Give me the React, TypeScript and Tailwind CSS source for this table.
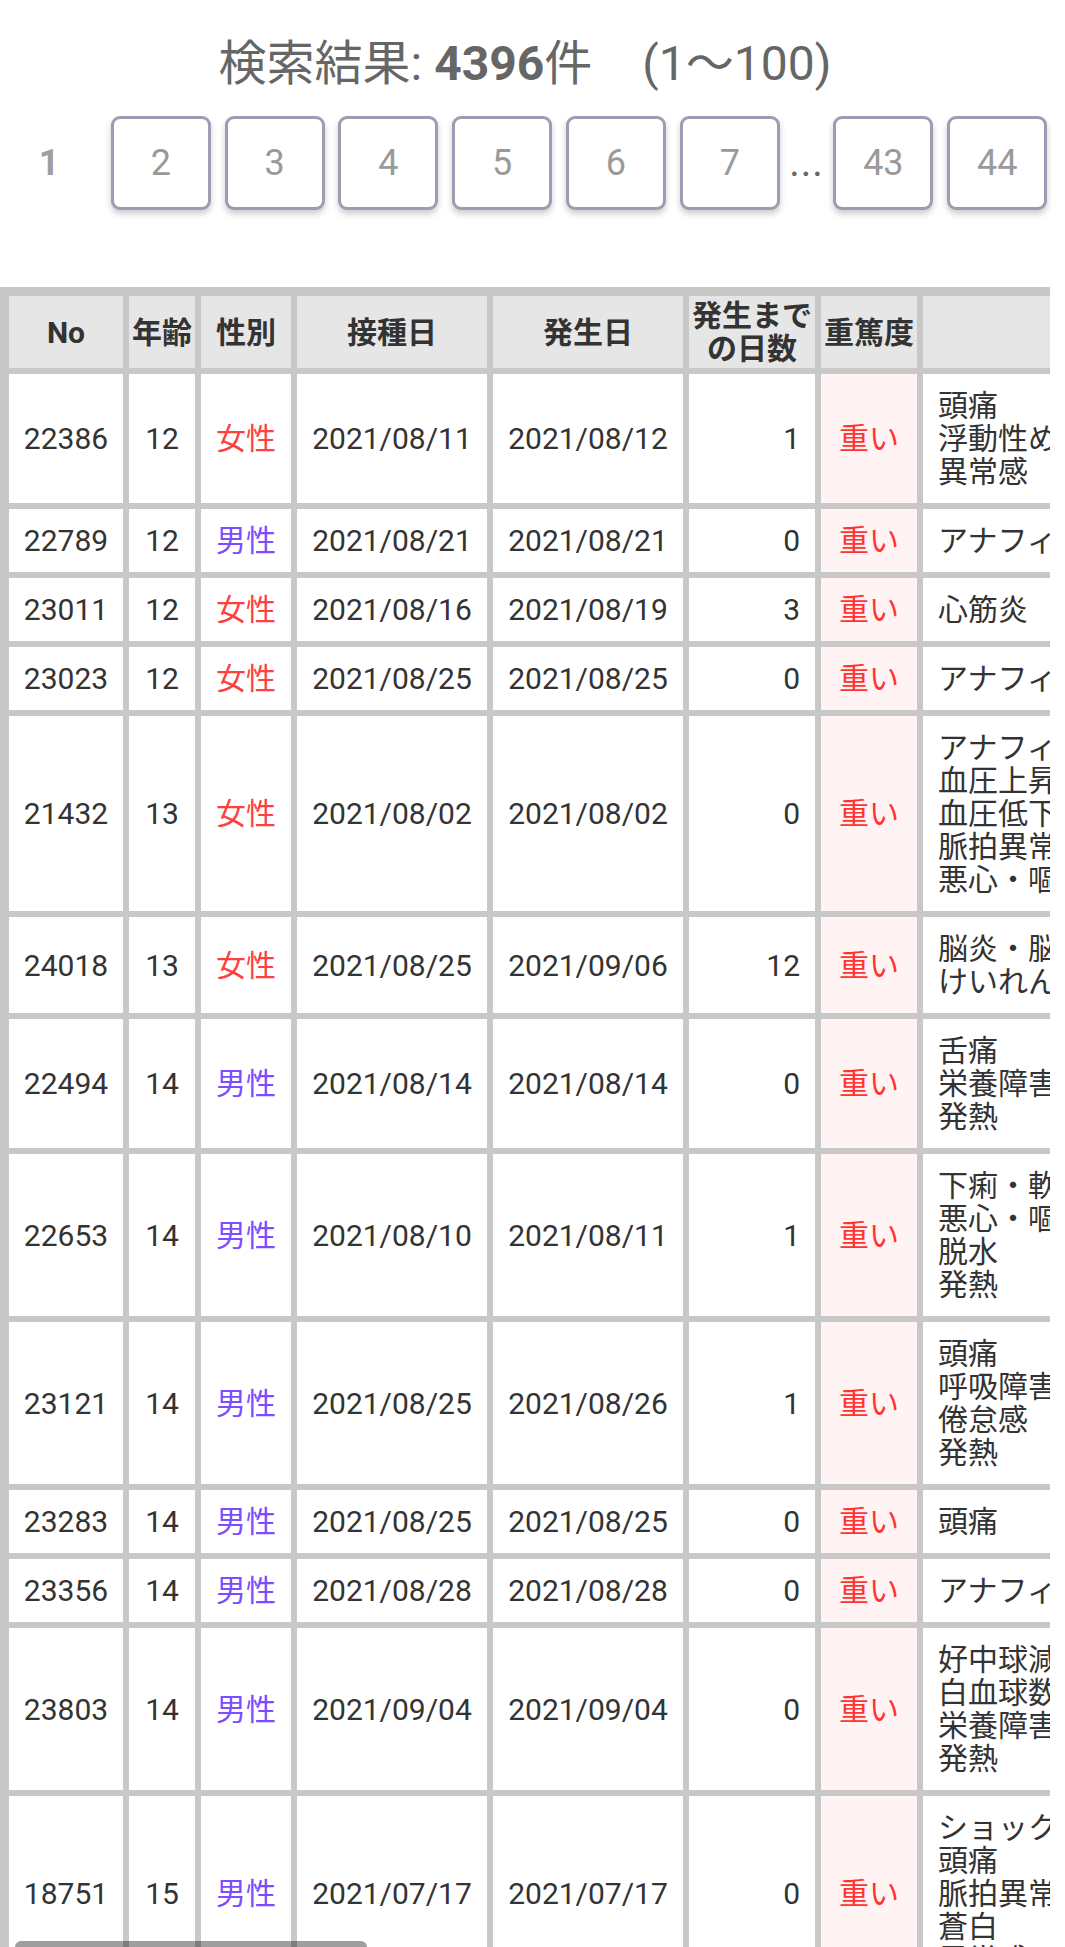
import clsx from "clsx";

type Row = {
  no: string;
  age: string;
  sex: "女性" | "男性";
  vaccinated: string;
  onset: string;
  days: string;
  symptoms: string[];
};

const rows: Row[] = [
  { no: "22386", age: "12", sex: "女性", vaccinated: "2021/08/11", onset: "2021/08/12", days: "1", symptoms: ["頭痛", "浮動性めまい", "異常感"] },
  { no: "22789", age: "12", sex: "男性", vaccinated: "2021/08/21", onset: "2021/08/21", days: "0", symptoms: ["アナフィラキシー反応"] },
  { no: "23011", age: "12", sex: "女性", vaccinated: "2021/08/16", onset: "2021/08/19", days: "3", symptoms: ["心筋炎"] },
  { no: "23023", age: "12", sex: "女性", vaccinated: "2021/08/25", onset: "2021/08/25", days: "0", symptoms: ["アナフィラキシー反応"] },
  { no: "21432", age: "13", sex: "女性", vaccinated: "2021/08/02", onset: "2021/08/02", days: "0", symptoms: ["アナフィラキシー反応", "血圧上昇", "血圧低下", "脈拍異常", "悪心・嘔吐"] },
  { no: "24018", age: "13", sex: "女性", vaccinated: "2021/08/25", onset: "2021/09/06", days: "12", symptoms: ["脳炎・脳症", "けいれん"] },
  { no: "22494", age: "14", sex: "男性", vaccinated: "2021/08/14", onset: "2021/08/14", days: "0", symptoms: ["舌痛", "栄養障害", "発熱"] },
  { no: "22653", age: "14", sex: "男性", vaccinated: "2021/08/10", onset: "2021/08/11", days: "1", symptoms: ["下痢・軟便", "悪心・嘔吐", "脱水", "発熱"] },
  { no: "23121", age: "14", sex: "男性", vaccinated: "2021/08/25", onset: "2021/08/26", days: "1", symptoms: ["頭痛", "呼吸障害", "倦怠感", "発熱"] },
  { no: "23283", age: "14", sex: "男性", vaccinated: "2021/08/25", onset: "2021/08/25", days: "0", symptoms: ["頭痛"] },
  { no: "23356", age: "14", sex: "男性", vaccinated: "2021/08/28", onset: "2021/08/28", days: "0", symptoms: ["アナフィラキシー反応"] },
  { no: "23803", age: "14", sex: "男性", vaccinated: "2021/09/04", onset: "2021/09/04", days: "0", symptoms: ["好中球減少症", "白血球数減少", "栄養障害", "発熱"] },
  { no: "18751", age: "15", sex: "男性", vaccinated: "2021/07/17", onset: "2021/07/17", days: "0", symptoms: ["ショック", "頭痛", "脈拍異常", "蒼白", "異常感"] },
];

const pages = ["2", "3", "4", "5", "6", "7"];

// column widths, shared by header and body rows
const cols = {
  no: "w-[114px]",
  age: "w-[66px]",
  sex: "w-[90px]",
  vaccinated: "w-[190px]",
  onset: "w-[190px]",
  days: "w-[126px]",
  severity: "w-[96px]",
  symptoms: "w-[2200px]",
};

function HeadCell({ className, children }: { className: string; children?: React.ReactNode }) {
  return (
    <div className={clsx("flex shrink-0 items-center justify-center bg-[#e6e6e6] p-[3px] text-center font-bold", className)}>
      {children}
    </div>
  );
}

function Cell({ className, children }: { className: string; children?: React.ReactNode }) {
  return <div className={clsx("flex shrink-0 items-center bg-white p-[15px]", className)}>{children}</div>;
}

function PageButton({ label }: { label: string }) {
  return (
    <button
      type="button"
      className="flex h-[94px] w-[100px] shrink-0 items-center justify-center rounded-[9px] border-[3px] border-[#9c9cb3] bg-white text-[36px] text-[#9a9a9a] shadow-[0_4px_6px_rgba(0,0,0,0.2)]"
    >
      {label}
    </button>
  );
}

export default function App() {
  return (
    <div className="relative h-[1947px] w-[1065px] overflow-hidden bg-white font-[Roboto,'Noto_Sans_CJK_JP',sans-serif] text-[#333]">
      <div className="w-[1050px]">
        <h1 className="pt-[35px] text-center text-[48px] leading-[58px] font-normal text-[#666]">
          検索結果: <span className="font-bold">4396</span>件<span className="ml-[50px]">(1〜100)</span>
        </h1>

        <div className="mt-[23px] -ml-[3px] flex items-center gap-[13.8px]">
          <span className="flex h-[94px] w-[100px] shrink-0 items-center justify-center pl-[4px] text-[36px] font-bold text-[#9e9e9e]">
            1
          </span>
          {pages.map((p) => (
            <PageButton key={p} label={p} />
          ))}
          <span className="flex h-[94px] w-[26px] shrink-0 items-end justify-center pb-[27px] text-[40px] leading-none tracking-[1px] text-[#666]">
            ...
          </span>
          <PageButton label="43" />
          <PageButton label="44" />
        </div>

        <div className="mt-[77px] overflow-hidden">
          <div className="flex w-max flex-col gap-[6px] bg-[#c8c8c8] p-[9px] text-[30px] leading-[33px]">
            <div className="flex gap-[6px]">
              <HeadCell className={cols.no}>No</HeadCell>
              <HeadCell className={cols.age}>年齢</HeadCell>
              <HeadCell className={cols.sex}>性別</HeadCell>
              <HeadCell className={cols.vaccinated}>接種日</HeadCell>
              <HeadCell className={cols.onset}>発生日</HeadCell>
              <HeadCell className={cols.days}>
                発生まで
                <br />
                の日数
              </HeadCell>
              <HeadCell className={cols.severity}>重篤度</HeadCell>
              <HeadCell className={cols.symptoms}>症状</HeadCell>
            </div>

            {rows.map((row) => (
              <div key={row.no} className="flex gap-[6px]">
                <Cell className={clsx(cols.no, "justify-center")}>{row.no}</Cell>
                <Cell className={clsx(cols.age, "justify-center")}>{row.age}</Cell>
                <Cell className={clsx(cols.sex, "justify-center", row.sex === "女性" ? "text-[#ff4040]" : "text-[#7c4dff]")}>
                  {row.sex}
                </Cell>
                <Cell className={clsx(cols.vaccinated, "justify-center")}>{row.vaccinated}</Cell>
                <Cell className={clsx(cols.onset, "justify-center")}>{row.onset}</Cell>
                <Cell className={clsx(cols.days, "justify-end")}>{row.days}</Cell>
                <Cell className={clsx(cols.severity, "justify-center !bg-[#fff3f3] text-[#ff3333]")}>重い</Cell>
                <Cell className={clsx(cols.symptoms, "flex-col !items-start justify-center")}>
                  {row.symptoms.map((s) => (
                    <span key={s}>{s}</span>
                  ))}
                </Cell>
              </div>
            ))}
          </div>
        </div>
      </div>

      {/* horizontal scrollbar thumb of the table */}
      <div className="absolute top-[1941px] left-[15px] h-[12px] w-[352px] rounded-full bg-[rgba(0,0,0,0.38)]" />
    </div>
  );
}
